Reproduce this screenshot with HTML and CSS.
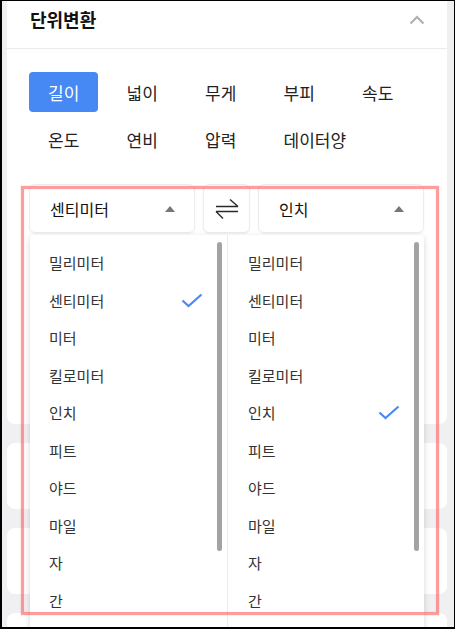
FILE: index.html
```html
<!DOCTYPE html>
<html lang="ko">
<head>
<meta charset="utf-8">
<title>단위변환</title>
<link rel="stylesheet" href="styles.css">
</head>
<body>
<div class="frame">
  <div class="page">
    <section class="card main">
      <header class="card-head">
        <h2 class="title">단위변환</h2>
        <svg class="chev" width="16" height="10" viewBox="0 0 16 10"><polyline points="1.5,8.5 8,2 14.5,8.5" fill="none" stroke="#b0b0b0" stroke-width="2.2"/></svg>
      </header>
      <div class="card-body">
        <div class="tabs">
          <button class="tab active">길이</button>
          <button class="tab">넓이</button>
          <button class="tab">무게</button>
          <button class="tab">부피</button>
          <button class="tab">속도</button>
          <button class="tab">온도</button>
          <button class="tab">연비</button>
          <button class="tab">압력</button>
          <button class="tab">데이터양</button>
        </div>
        <div class="select-row">
          <div class="select"><span>센티미터</span><i class="caret"></i></div>
          <button class="swap">
            <svg width="26" height="22" viewBox="0 0 26 22"><path d="M2 8.5H24M16 1.5L24 8.5M24 13.5H2M2 13.5L9 20.5" fill="none" stroke="#2a2a2a" stroke-width="1.4"/></svg>
          </button>
          <div class="select"><span>인치</span><i class="caret"></i></div>

          <div class="menu">
            <ul class="list">
              <li>밀리미터</li>
              <li class="sel">센티미터<svg class="check" width="22" height="15" viewBox="0 0 22 15"><polyline points="1.5,7.5 7.5,13 20.5,1.5" fill="none" stroke="#4a8af4" stroke-width="2.2"/></svg></li>
              <li>미터</li>
              <li>킬로미터</li>
              <li>인치</li>
              <li>피트</li>
              <li>야드</li>
              <li>마일</li>
              <li>자</li>
              <li>간</li>
              <i class="thumb"></i>
            </ul>
            <ul class="list">
              <li>밀리미터</li>
              <li>센티미터</li>
              <li>미터</li>
              <li>킬로미터</li>
              <li class="sel">인치<svg class="check" width="22" height="15" viewBox="0 0 22 15"><polyline points="1.5,7.5 7.5,13 20.5,1.5" fill="none" stroke="#4a8af4" stroke-width="2.2"/></svg></li>
              <li>피트</li>
              <li>야드</li>
              <li>마일</li>
              <li>자</li>
              <li>간</li>
              <i class="thumb"></i>
            </ul>
          </div>
        </div>
      </div>
    </section>
    <section class="card small"></section>
    <section class="card small"></section>
    <section class="card small"></section>
  </div>
  <div class="highlight"></div>
</div>
</body>
</html>
```
FILE: styles.css
```css
* { box-sizing: border-box; }
html, body { margin: 0; padding: 0; }
body {
  font-family: "Noto Sans CJK KR", "Noto Sans", sans-serif;
  background: #fff;
}
.frame {
  position: relative;
  width: 455px;
  height: 629px;
  overflow: hidden;
  border-style: solid;
  border-color: #000;
  border-width: 1px 1px 2px 2px;
  background: #f0f0f2;
}
.page {
  display: flex;
  flex-direction: column;
  gap: 19px;
  padding: 0 7px 0 5px;
}
.card {
  background: #fff;
  border-radius: 0 0 8px 8px;
}
.card.small {
  border-radius: 8px;
  height: 66px;
  flex: none;
}
.main { height: 423px; flex: none; }
.card-head {
  height: 48px;
  display: flex;
  align-items: flex-start;
  justify-content: space-between;
  padding: 5px 22px 0 23px;
  border-bottom: 1px solid #ebebeb;
}
.title {
  margin: 0;
  font-size: 18px;
  line-height: 26px;
  font-weight: 700;
  color: #111;
}
.chev { display: block; margin-top: 9px; }
.card-body { padding: 23px 22px 0 22px; }
.tabs {
  display: flex;
  flex-wrap: wrap;
  gap: 7px 9.5px;
  width: 400px;
}
.tab {
  font: inherit;
  font-size: 17px;
  color: #222;
  background: none;
  border: 0;
  border-radius: 4px;
  height: 40px;
  min-width: 69px;
  padding: 0 18px 0 19px;
  text-align: left;
  cursor: pointer;
}
.tab.active { background: #4688f4; color: #fff; }
.select-row {
  position: relative;
  display: flex;
  gap: 8px;
  margin-top: 25px;
  height: 49px;
}
.select {
  width: 166px;
  display: flex;
  align-items: center;
  justify-content: space-between;
  padding: 0 19px 0 20px;
  border: 1px solid #ececec;
  border-radius: 6px;
  box-shadow: 0 1px 2px rgba(0,0,0,0.06);
  font-size: 16px;
  color: #111;
}
.caret {
  width: 0; height: 0;
  border-left: 5px solid transparent;
  border-right: 5px solid transparent;
  border-bottom: 6px solid #777;
}
.swap {
  width: 47px;
  border: 1px solid #ececec;
  border-radius: 6px;
  background: #fff;
  box-shadow: 0 1px 2px rgba(0,0,0,0.06);
  display: flex;
  align-items: center;
  justify-content: center;
  padding: 0;
}
.menu {
  position: absolute;
  top: calc(100% + 2px);
  left: 1px;
  width: 394px;
  height: 420px;
  display: grid;
  grid-template-columns: 197px 197px;
  background: #fff;
  border-radius: 4px;
  box-shadow: 0 2px 6px rgba(0,0,0,0.16);
  overflow: hidden;
}
.list {
  position: relative;
  list-style: none;
  margin: 0;
  padding: 9px 0 0 0;
  overflow: hidden;
}
.list + .list { border-left: 1px solid #ececec; }
.list li {
  height: 37.5px;
  display: flex;
  align-items: center;
  justify-content: space-between;
  padding: 0 24px 0 19px;
  font-size: 15px;
  color: #333;
}
.list + .list li { padding-left: 20px; }
.check { display: block; }
.thumb {
  position: absolute;
  right: 5px;
  top: 7px;
  width: 5px;
  height: 309px;
  border-radius: 3px;
  background: #a3a3a3;
}
.highlight {
  position: absolute;
  left: 19px;
  top: 185px;
  width: 418px;
  height: 429px;
  border: 3px solid rgba(255, 90, 90, 0.6);
  box-shadow: 0 0 1px rgba(255,90,90,0.5), inset 0 0 1px rgba(255,90,90,0.5);
  pointer-events: none;
}
```
